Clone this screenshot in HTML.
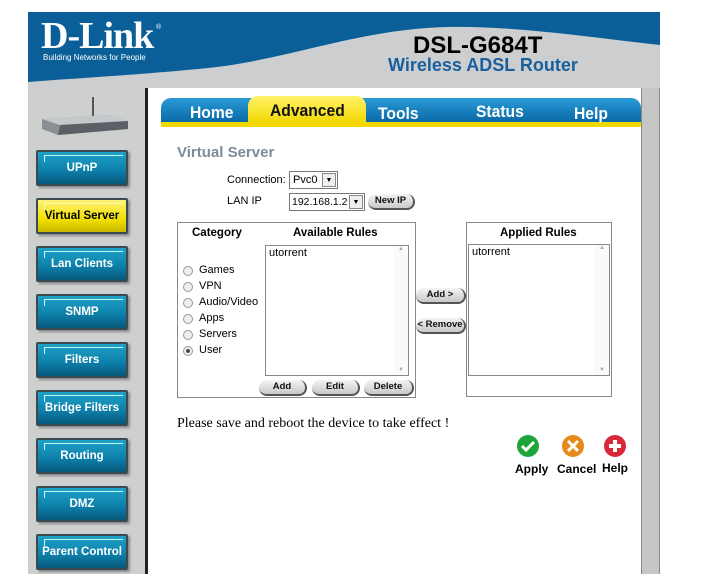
<!DOCTYPE html>
<html><head><style>
*{margin:0;padding:0;box-sizing:border-box}
body{width:701px;height:574px;background:#fff;position:relative;overflow:hidden;font-family:"Liberation Sans",sans-serif}
.a{position:absolute}
.nb{position:absolute;left:36px;width:92px;height:36px;background:linear-gradient(#1fa3c9,#0d7ea8 60%,#07577a);border:2px solid #3c4a50;border-radius:2px;color:#fff;font-weight:bold;font-size:11.5px;text-align:center;line-height:32px;box-shadow:2px 2px 2px #888}
.nb:before{content:"";position:absolute;left:6px;top:3px;width:78px;height:6px;border-left:1px solid #bfe;border-top:1px solid #bfe}
.nb.y{background:linear-gradient(#fff27a,#f2e000 60%,#c9b800);color:#000}
.nb.y:before{border-color:#fff8b0}
.btn{position:absolute;height:16px;border-radius:8px;background:linear-gradient(#f4f4f4,#c8c8c8);border-right:2px solid #555;border-bottom:2px solid #555;font-size:9.5px;font-weight:bold;text-align:center;line-height:14px;color:#111}
.t{font-size:11px;color:#000;position:absolute}
.rad{position:absolute;left:183px;width:10px;height:10px;border-radius:50%;border:1px solid #999;background:#eee}
.tab{position:absolute;top:103px;font-weight:bold;font-size:17px;color:#fff;font-family:"Liberation Sans",sans-serif;transform:scaleX(0.92);transform-origin:left}
</style></head><body>
<div class="a" style="left:28px;top:12px;width:632px;height:76px;overflow:hidden">
<svg width="632" height="76"><rect width="632" height="76" fill="#cdcecf"/><path d="M0 0H632V33C560 25 490 14 420 15C330 17 260 48 180 56C110 63 50 66 0 70Z" fill="#0a5f99"/></svg></div>
<div class="a" style="left:41px;top:14px;font-family:'Liberation Serif',serif;font-weight:bold;font-size:38px;color:#fff;letter-spacing:-1px">D-Link</div>
<div class="a" style="left:156px;top:24px;font-size:7px;color:#fff">®</div>
<div class="a" style="left:43px;top:53px;font-size:8px;color:#fff">Building Networks for People</div>
<div class="a" style="left:413px;top:32px;font-size:24px;font-weight:bold;color:#000">DSL-G684T</div>
<div class="a" style="left:388px;top:55px;font-size:18px;font-weight:bold;color:#1a5f9c">Wireless ADSL Router</div>
<div class="a" style="left:28px;top:88px;width:118px;height:486px;background:#ced0d0"></div>
<div class="a" style="left:145px;top:88px;width:3px;height:486px;background:#222"></div>
<div class="a" style="left:148px;top:88px;width:493px;height:486px;background:#fff"></div>
<div class="a" style="left:641px;top:88px;width:19px;height:486px;background:#c6c6c6;border-left:1px solid #888;border-right:1px solid #888"></div>
<svg class="a" style="left:38px;top:95px" width="92" height="45"><line x1="55" y1="2" x2="55" y2="22" stroke="#555" stroke-width="2"/><path d="M4 24L70 20L90 26L90 34L20 40L4 34Z" fill="#8a8f93"/><path d="M4 24L70 20L90 26L22 30Z" fill="#c5c9cc"/><path d="M22 30L90 26L90 34L20 40Z" fill="#5a6066"/></svg>
<div class="a" style="left:161px;top:98px;width:480px;height:24px;background:linear-gradient(#2a9ad6,#0a6aa8);border-radius:10px 10px 0 0"></div>
<div class="a" style="left:248px;top:96px;width:118px;height:27px;background:linear-gradient(#fff36a,#f2d800);border-radius:10px 10px 0 0"></div>
<div class="a" style="left:161px;top:122px;width:480px;height:5px;background:#f2d800"></div>
<div class="tab" style="left:190px">Home</div>
<div class="tab" style="left:270px;top:101px;color:#111">Advanced</div>
<div class="tab" style="left:378px;top:104px">Tools</div>
<div class="tab" style="left:476px;top:102px">Status</div>
<div class="tab" style="left:574px;top:104px">Help</div>
<div class="nb" style="top:150px">UPnP</div>
<div class="nb y" style="top:198px">Virtual Server</div>
<div class="nb" style="top:246px">Lan Clients</div>
<div class="nb" style="top:294px">SNMP</div>
<div class="nb" style="top:342px">Filters</div>
<div class="nb" style="top:390px">Bridge Filters</div>
<div class="nb" style="top:438px">Routing</div>
<div class="nb" style="top:486px">DMZ</div>
<div class="nb" style="top:534px">Parent Control</div>
<div class="a" style="left:177px;top:144px;font-size:15px;font-weight:bold;color:#7d8c98">Virtual Server</div>
<div class="t" style="left:227px;top:174px">Connection:</div>
<div class="a" style="left:289px;top:171px;width:49px;height:18px;border:1px solid #777;font-size:11px;line-height:16px;padding-left:3px">Pvc0<span style="position:absolute;right:1px;top:1px;width:14px;height:14px;border:1px solid #888;background:#eee;font-size:7px;text-align:center;line-height:13px">▼</span></div>
<div class="t" style="left:227px;top:195px">LAN IP</div>
<div class="a" style="left:289px;top:193px;width:76px;height:18px;border:1px solid #777;font-size:10.5px;line-height:16px;padding-left:2px;white-space:nowrap;overflow:hidden">192.168.1.2<span style="position:absolute;right:1px;top:1px;width:14px;height:14px;border:1px solid #888;background:#eee;font-size:7px;text-align:center;line-height:13px">▼</span></div>
<div class="btn" style="left:368px;top:194px;width:47px">New IP</div>
<div class="a" style="left:177px;top:222px;width:239px;height:176px;border:1px solid #888"></div>
<div class="a" style="left:192px;top:227px;font-size:11.5px;font-weight:bold">Category</div>
<div class="a" style="left:293px;top:227px;font-size:11.5px;font-weight:bold">Available Rules</div>
<div class="a" style="left:265px;top:245px;width:144px;height:131px;border:1px solid #888"><div class="t" style="left:3px;top:1px">utorrent</div><div class="a" style="right:0;top:0;width:14px;height:129px;background:#fafafa;font-size:6px;color:#aaa;text-align:center">▲<div style="position:absolute;bottom:2px;width:14px">▼</div></div></div>
<div class="rad" style="top:266px"></div><div class="t" style="left:199px;top:264px">Games</div>
<div class="rad" style="top:282px"></div><div class="t" style="left:199px;top:280px">VPN</div>
<div class="rad" style="top:298px"></div><div class="t" style="left:199px;top:296px">Audio/Video</div>
<div class="rad" style="top:314px"></div><div class="t" style="left:199px;top:312px">Apps</div>
<div class="rad" style="top:330px"></div><div class="t" style="left:199px;top:328px">Servers</div>
<div class="rad" style="top:346px;background:radial-gradient(#345 30%,#eee 40%)"></div><div class="t" style="left:199px;top:344px">User</div>
<div class="btn" style="left:259px;top:380px;width:48px">Add</div>
<div class="btn" style="left:312px;top:380px;width:48px">Edit</div>
<div class="btn" style="left:364px;top:380px;width:50px">Delete</div>
<div class="btn" style="left:416px;top:288px;width:50px">Add &gt;</div>
<div class="btn" style="left:416px;top:318px;width:50px">&lt; Remove</div>
<div class="a" style="left:466px;top:222px;width:146px;height:175px;border:1px solid #888"></div>
<div class="a" style="left:500px;top:227px;font-size:11.5px;font-weight:bold">Applied Rules</div>
<div class="a" style="left:468px;top:244px;width:142px;height:132px;border:1px solid #888"><div class="t" style="left:3px;top:1px">utorrent</div><div class="a" style="right:0;top:0;width:14px;height:130px;background:#fafafa;font-size:6px;color:#aaa;text-align:center">▲<div style="position:absolute;bottom:2px;width:14px">▼</div></div></div>
<div class="a" style="left:177px;top:416px;font-family:'Liberation Serif',serif;font-size:14px">Please save and reboot the device to take effect !</div>
<svg class="a" style="left:515px;top:434px" width="115" height="26">
<circle cx="13" cy="12" r="11" fill="#1ca63a"/><path d="M7 12l4 4 8-8" stroke="#fff" stroke-width="3" fill="none"/>
<circle cx="58" cy="12" r="11" fill="#e88a1a"/><path d="M53 7l10 10M63 7l-10 10" stroke="#fff" stroke-width="3"/>
<circle cx="100" cy="12" r="11" fill="#d8283a"/><path d="M100 6v12M94 12h12" stroke="#fff" stroke-width="4"/></svg>
<div class="a" style="left:515px;top:462px;font-size:12px;font-weight:bold">Apply</div>
<div class="a" style="left:557px;top:462px;font-size:12px;font-weight:bold">Cancel</div>
<div class="a" style="left:602px;top:461px;font-size:12px;font-weight:bold">Help</div>
</body></html>
